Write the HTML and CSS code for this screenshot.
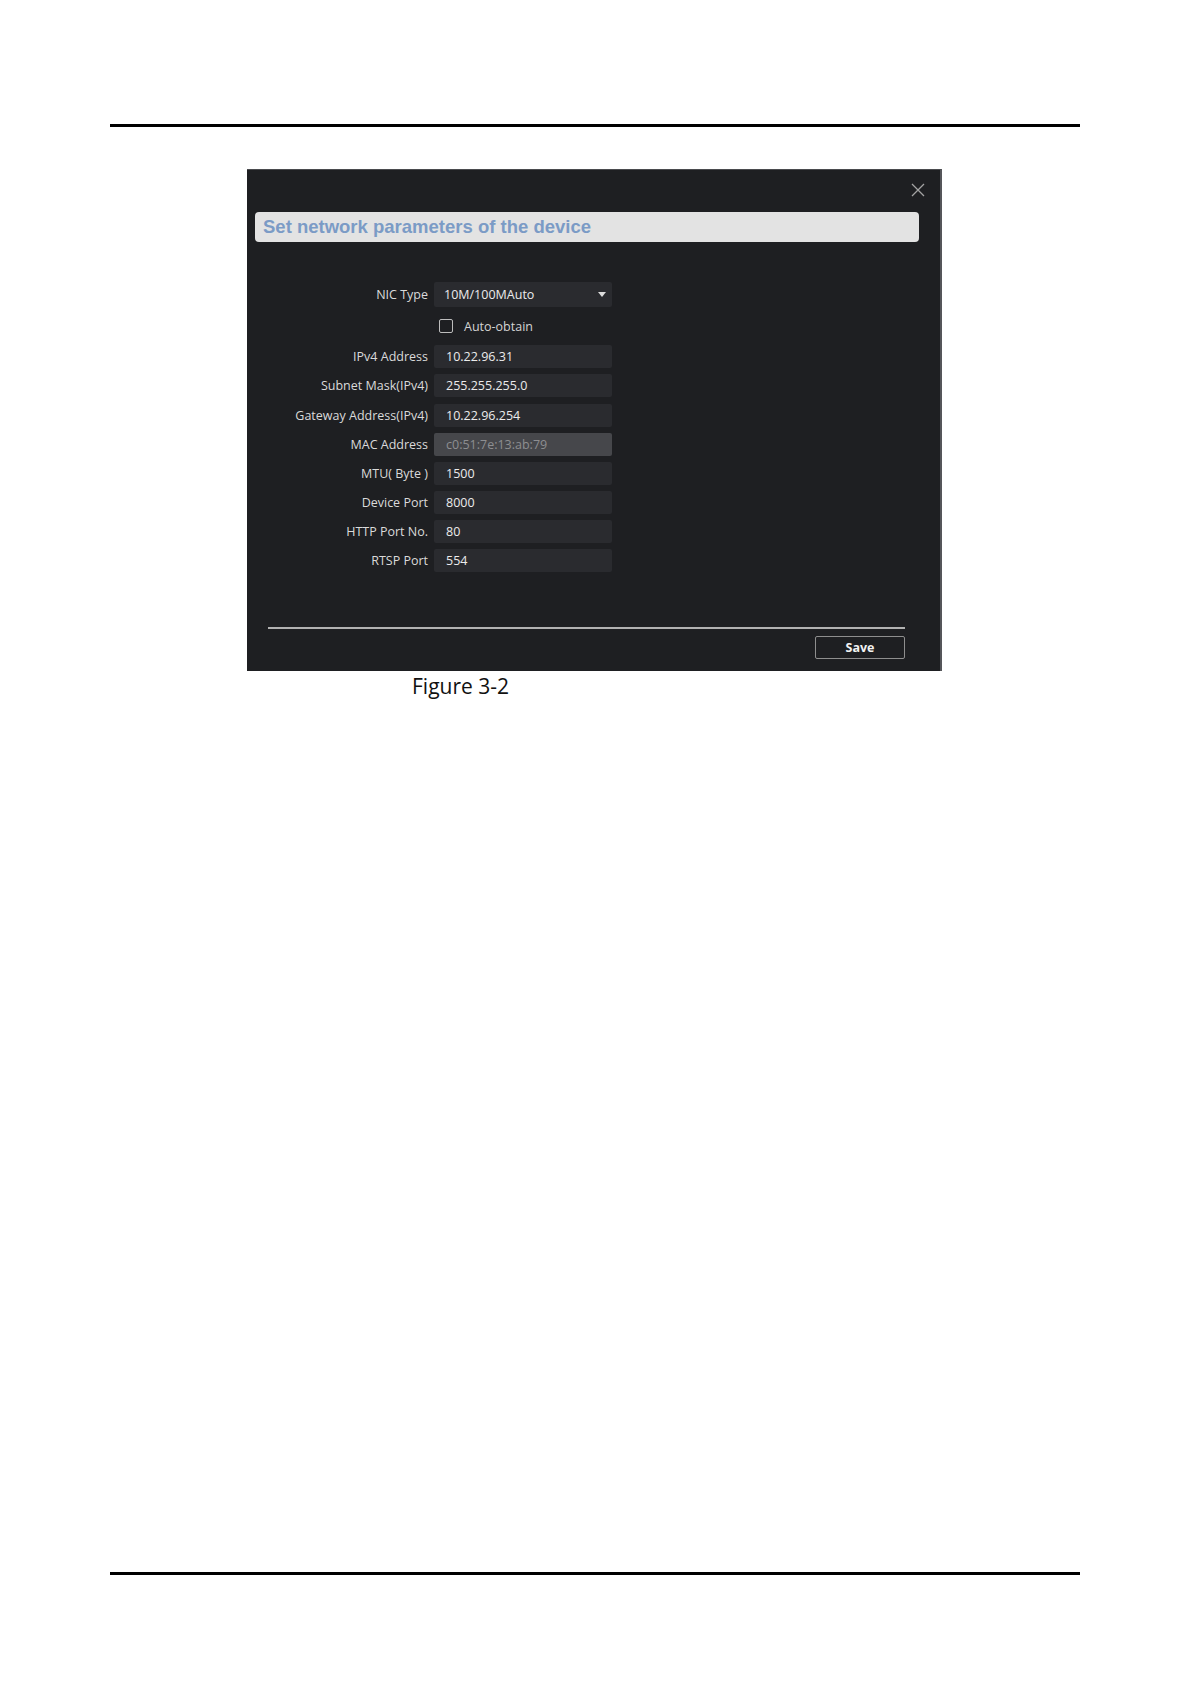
FILE: index.html
```html
<!DOCTYPE html>
<html>
<head>
<meta charset="utf-8">
<link rel="stylesheet" href="styles.css">
</head>
<body>
<div class="page">
  <div class="rule"></div>
  <div class="figure">
    <div class="dialog">
      <div class="dlg-top">
        <svg class="close" width="14" height="14" viewBox="0 0 14 14"><path d="M1 1 L13 13 M13 1 L1 13" stroke="#a3a3a3" stroke-width="1.3" fill="none"/></svg>
      </div>
      <div class="title-bar">Set network parameters of the device</div>
      <div class="form">
        <div class="label">NIC Type</div>
        <div class="field select">10M/100MAuto<span class="arrow"></span></div>

        <div class="label"></div>
        <div class="check-row"><span class="checkbox"></span><span class="check-text">Auto-obtain</span></div>

        <div class="label">IPv4 Address</div>
        <div class="field">10.22.96.31</div>

        <div class="label">Subnet Mask(IPv4)</div>
        <div class="field">255.255.255.0</div>

        <div class="label">Gateway Address(IPv4)</div>
        <div class="field">10.22.96.254</div>

        <div class="label">MAC Address</div>
        <div class="field disabled">c0:51:7e:13:ab:79</div>

        <div class="label">MTU( Byte )</div>
        <div class="field">1500</div>

        <div class="label">Device Port</div>
        <div class="field">8000</div>

        <div class="label">HTTP Port No.</div>
        <div class="field">80</div>

        <div class="label">RTSP Port</div>
        <div class="field">554</div>
      </div>
      <div class="separator"></div>
      <div class="footer">
        <button class="save">Save</button>
      </div>
    </div>
    <div class="caption">Figure 3-2</div>
  </div>
  <div class="rule bottom"></div>
</div>
</body>
</html>
```

FILE: styles.css
```css
html, body {
  margin: 0;
  padding: 0;
  background: #ffffff;
}

.page {
  width: 1191px;
  min-height: 1684px;
  box-sizing: border-box;
  padding-top: 124px;
  padding-bottom: 109px;
  display: flex;
  flex-direction: column;
}

.rule {
  margin-left: 110px;
  width: 970px;
  height: 3px;
  background: #000000;
}

.rule.bottom {
  margin-top: auto;
}

.figure {
  margin-top: 42px;
  margin-left: 247px;
  display: flex;
  flex-direction: column;
}

.dialog {
  width: 695px;
  height: 502px;
  box-sizing: border-box;
  background: #1e1f22;
  border-top: 1px solid #4a4b4e;
  border-right: 2px solid #55565a;
  display: flex;
  flex-direction: column;
  font-family: "Open Sans", "Noto Sans", sans-serif;
}

.dlg-top {
  height: 42px;
  display: flex;
  justify-content: flex-end;
  align-items: flex-start;
  padding-right: 15px;
  padding-top: 13px;
  box-sizing: border-box;
}

.close {
  display: block;
}

.title-bar {
  margin-left: 8px;
  width: 664px;
  height: 30px;
  box-sizing: border-box;
  background: #e3e3e3;
  border-radius: 4px;
  padding-left: 8px;
  display: flex;
  align-items: center;
  font-family: "Liberation Sans", Arial, sans-serif;
  font-weight: bold;
  font-size: 18.5px;
  color: #7b9bc6;
}

.form {
  margin-top: 40px;
  display: grid;
  grid-template-columns: 181px 178px;
  grid-template-rows: 25px 26px repeat(8, 23px);
  column-gap: 6px;
  row-gap: 6.15px;
  font-size: 12.5px;
}

.label {
  color: #dadada;
  text-align: right;
  display: flex;
  align-items: center;
  justify-content: flex-end;
  white-space: nowrap;
}

.field {
  background: #2a2b2f;
  border-radius: 2px;
  color: #ececec;
  display: flex;
  align-items: center;
  padding-left: 12px;
  box-sizing: border-box;
  white-space: nowrap;
}

.field.select {
  padding-left: 10px;
  position: relative;
}

.arrow {
  position: absolute;
  right: 6px;
  top: 10px;
  width: 0;
  height: 0;
  border-left: 4.5px solid transparent;
  border-right: 4.5px solid transparent;
  border-top: 5px solid #dcdcdc;
}

.field.disabled {
  background: #46474b;
  color: #8d8e91;
}

.check-row {
  display: flex;
  align-items: center;
  padding-left: 5px;
}

.checkbox {
  width: 14px;
  height: 14px;
  box-sizing: border-box;
  border: 1.5px solid #bdbdbd;
  border-radius: 2px;
}

.check-text {
  margin-left: 11px;
  color: #d4d4d4;
}

.separator {
  margin-top: 55px;
  margin-left: 21px;
  width: 637px;
  height: 2px;
  background: #b2b2b2;
}

.footer {
  margin-top: 7px;
  display: flex;
  justify-content: flex-end;
  padding-right: 35px;
}

.save {
  width: 90px;
  height: 23px;
  box-sizing: border-box;
  background: transparent;
  border: 1px solid #8e8e8e;
  border-radius: 2px;
  color: #f2f2f2;
  font-family: "Open Sans", "Noto Sans", sans-serif;
  font-weight: bold;
  font-size: 12.5px;
  padding: 0;
  line-height: 20px;
}

.caption {
  margin-top: 1px;
  margin-left: 165px;
  font-family: "Open Sans", "Noto Sans", sans-serif;
  font-size: 21px;
  line-height: 28px;
  color: #111111;
}
```
